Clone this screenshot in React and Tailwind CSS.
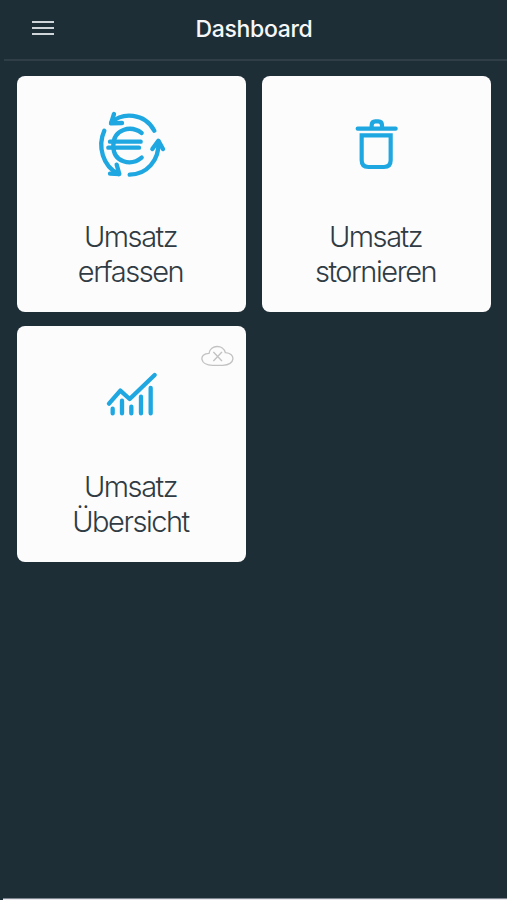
function EuroIcon() {
  return (
    <svg className="size-[85px]" viewBox="-3 0 255 255" fill="none" stroke="#1ea7e1" strokeWidth="13" strokeLinecap="round" strokeLinejoin="round">
      <path d="M64 68C96 37 163 37 193 92" />
      <path d="M72 42 63 70 96 69" />
      <path d="M43 92C22 139 38 199 86 222" />
      <path d="M60 221 88 222 80 194" />
      <path d="M119 224C168 224 209 183 205 125" />
      <path d="M187 147 205 122 219 147" />
      <path d="M155 99C123 75 70 86 70 137S123 199 155 173" />
      <path d="M60 125H152M55 143H147" />
    </svg>
  );
}

function TrashIcon() {
  return (
    <svg className="size-[85px]" viewBox="-32 -15 255 255" fill="none" stroke="#1ea7e1" strokeWidth="12.5" strokeLinecap="round">
      <path d="M39 71H153" />
      <path d="M81 68V61Q81 49 92 49H101Q112 49 112 61V68" />
      <path d="M51 91H138V166Q138 186 118 186H71Q51 186 51 166Z" />
    </svg>
  );
}

function ChartIcon() {
  return (
    <svg className="size-[85px]" viewBox="-17 -30 255 255" fill="none" stroke="#1ea7e1" strokeWidth="13" strokeLinecap="round" strokeLinejoin="round">
      <path d="M43 131 77 92 105 117 180 45" />
      <path d="M54 146V160M82 122V160M110 140V160M139 110V160M168 84V160" />
    </svg>
  );
}

function OfflineIcon() {
  return (
    <svg className="absolute top-[19px] right-3 h-[22px] w-[33px]" viewBox="33 75 99 66" fill="none" stroke="#c2c2c2" strokeWidth="4" strokeLinecap="round">
      <path d="M68 136C28 136 26 101 57 100C61 73 101 73 106 98C138 99 137 136 98 136Z" />
      <path d="M71 97 95 122M95 97 71 122" />
    </svg>
  );
}

const tiles = [
  { icon: EuroIcon, lines: ['Umsatz', 'erfassen'] },
  { icon: TrashIcon, lines: ['Umsatz', 'stornieren'] },
  { icon: ChartIcon, lines: ['Umsatz', 'Übersicht'], offline: true },
];

function Tile({ icon: Icon, lines, offline }) {
  return (
    <button className="relative flex h-[236px] flex-col items-center rounded-lg bg-[#fcfcfc] pt-6">
      {offline && <OfflineIcon />}
      <Icon />
      <span className="mt-[34px] pr-[2px] text-[29px] leading-[35px] font-light tracking-[-1.45px] text-[#303b43]">
        {lines[0]}
        <br />
        {lines[1]}
      </span>
    </button>
  );
}

export default function App() {
  return (
    <div className="flex h-[900px] w-[507px] flex-col overflow-hidden bg-[#1e2e37] font-['Inter',sans-serif]">
      <header className="ml-1 grid h-[61px] grid-cols-[1fr_auto_1fr] items-center border-b-2 border-[#2f3e47] pr-1">
        <button className="ml-7 flex w-[22px] flex-col gap-1 pb-1" aria-label="Menü">
          <span className="h-[2px] bg-[#cfd5d8]" />
          <span className="h-[2px] bg-[#cfd5d8]" />
          <span className="h-[2px] bg-[#cfd5d8]" />
        </button>
        <h1 className="pb-[2px] pl-px text-[23px] leading-7 font-medium tracking-[-0.35px] text-[#f5f7f8]">Dashboard</h1>
      </header>
      <main className="grid flex-1 grid-cols-2 content-start gap-x-4 gap-y-[14px] pt-[15px] pr-4 pl-[17px]">
        {tiles.map((tile) => (
          <Tile key={tile.lines[1]} {...tile} />
        ))}
      </main>
      <div className="ml-[3px] h-[2px] border-t border-[#7d868e] bg-[#e9e6ee]" />
    </div>
  );
}
